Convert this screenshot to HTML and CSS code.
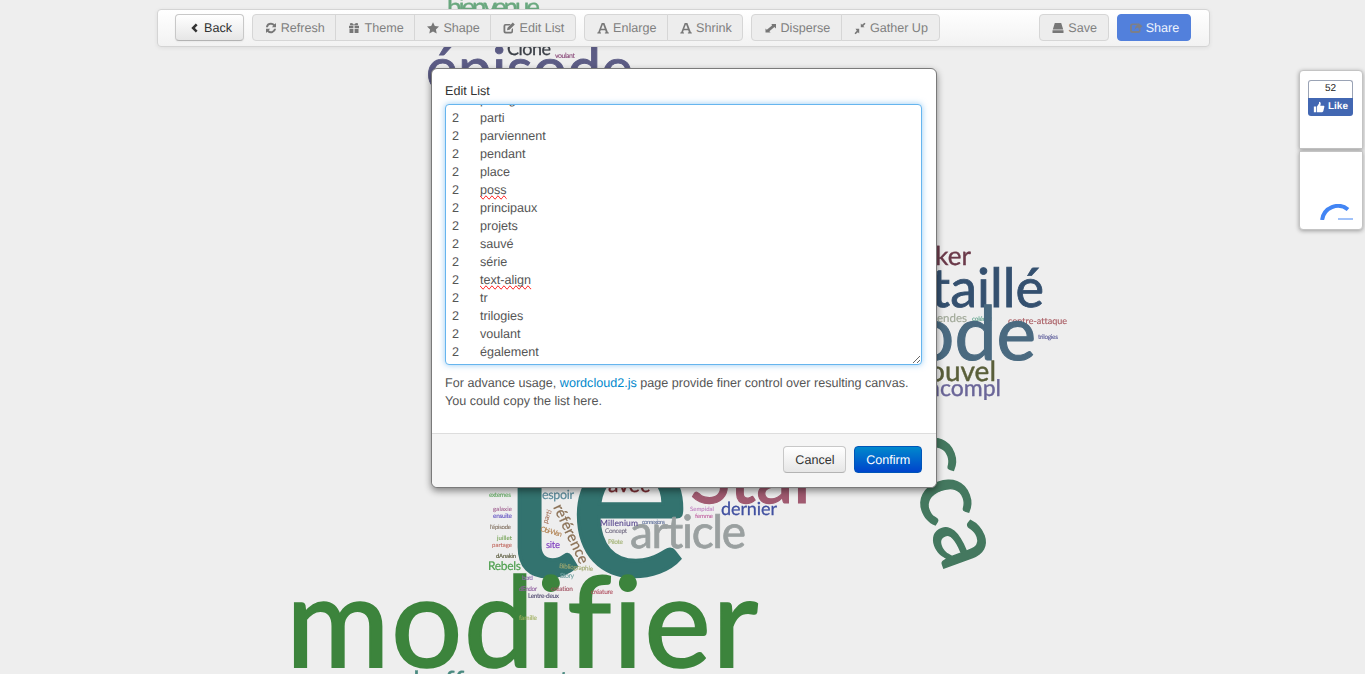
FILE: index.html
```html
<!DOCTYPE html>
<html lang="fr">
<head>
<meta charset="utf-8">
<title>Edit List</title>
<link rel="stylesheet" href="styles.css">
</head>
<body>
<svg class="cloud" viewBox="0 0 1365 674" aria-hidden="true">
  <g class="cloud-words">
    <text x="447" y="16" font-size="26" color="#6aa87f" textLength="93">bienvenue</text>
    <text x="405" y="41" font-size="14" color="#6fb0a8">y</text>
    <text x="563" y="41" font-size="14" color="#6fb0a8">y</text>
    <text x="507" y="55" font-size="18" color="#3c4048" textLength="44">Clone</text>
    <text x="555" y="58" font-size="7" color="#8a4a7a" textLength="20">voulant</text>
    <text x="426" y="90" font-size="60" color="#5c5c85" textLength="207">épisode</text>
    <text x="971" y="265" font-size="26" color="#6b3a4a" text-anchor="end">Walker</text>
    <text x="1044" y="307" font-size="54" color="#34506f" text-anchor="end">détaillé</text>
    <text x="967" y="322" font-size="11.500" color="#a0a898" text-anchor="end">légendes</text>
    <text x="972" y="321" font-size="6.500" color="#5aa088" textLength="20">coléopt</text>
    <text x="1008" y="324" font-size="9" color="#a85a60" textLength="59">contre-attaque</text>
    <text x="1038" y="339" font-size="6.500" color="#5a5a98" textLength="20">trilogies</text>
    <text x="1036" y="360" font-size="75" color="#4a6a80" text-anchor="end">épisode</text>
    <text x="996" y="381" font-size="28" color="#5a5f3a" text-anchor="end">nouvel</text>
    <text x="1001" y="396" font-size="23" color="#6a6598" text-anchor="end">incompl</text>
    <text x="899" y="445" font-size="95" color="#44785f" transform="rotate(70 899 445)">cca</text>
    <text x="496 569" y="575" font-size="230" color="#33736f">te</text>
    <text x="690" y="503" font-size="75" color="#a05a70">Star</text>
    <text x="608" y="492" font-size="21" color="#7a2a30" textLength="42">avec</text>
    <text x="542" y="499" font-size="12.500" color="#5a8a9a" textLength="32">espoir</text>
    <text x="489" y="497" font-size="6.500" color="#6ab06a" textLength="22">externes</text>
    <text x="721" y="515" font-size="18" color="#4050a0" textLength="56">dernier</text>
    <text x="630" y="548" font-size="46" color="#9aa0a0" textLength="116">article</text>
    <text x="690" y="511" font-size="6" color="#c080c0" textLength="24">Sempidal</text>
    <text x="695" y="518" font-size="6" color="#c060a0" textLength="18">femme</text>
    <text x="493" y="511" font-size="6" color="#a06090" textLength="19">galaxie</text>
    <text x="493" y="518" font-size="6.500" color="#6050c0" textLength="19">ensuite</text>
    <text x="490" y="529" font-size="6" color="#807060" textLength="21">l'épisode</text>
    <text x="497" y="540" font-size="6" color="#70a050" textLength="15">juillet</text>
    <text x="492" y="547" font-size="6" color="#c06a60" textLength="20">partage</text>
    <text x="496" y="558" font-size="6" color="#505030" textLength="20">dAnakin</text>
    <text x="488" y="570" font-size="12" color="#50a050" textLength="33">Rebels</text>
    <text x="553" y="507" font-size="15" color="#8a7055" transform="rotate(65 553 507)" textLength="64">référence</text>
    <text x="547" y="524" font-size="7" color="#a06a50" transform="rotate(-70 547 524)">parti</text>
    <text x="540" y="531" font-size="7" color="#b08050" transform="rotate(15 540 531)" textLength="22">Obi-Wan</text>
    <text x="546" y="548" font-size="9.500" color="#8040c0" textLength="14">site</text>
    <text x="600" y="526" font-size="8.500" color="#5a4a90" textLength="38">Millenium</text>
    <text x="642" y="524" font-size="6" color="#6a7aa0" textLength="23">connexions</text>
    <text x="605" y="533" font-size="6.500" color="#706a80" textLength="22">Concept</text>
    <text x="608" y="544" font-size="6.500" color="#a0b070" textLength="15">Pilote</text>
    <text x="286" y="667" font-size="126" color="#3c843c" textLength="472">modifier</text>
    <text x="559" y="568" font-size="6.500" color="#a0a870" transform="rotate(5 559 568)" textLength="34">Bibliographie</text>
    <text x="560" y="578" font-size="7" color="#70a0a0" textLength="14">Story</text>
    <text x="522" y="580" font-size="6.500" color="#9070b0" textLength="11">bord</text>
    <text x="519" y="591" font-size="6.500" color="#9060a0" textLength="18">dEndor</text>
    <text x="551" y="591" font-size="6.500" color="#a05060" textLength="22">création</text>
    <text x="528" y="598" font-size="6.500" color="#504a70" textLength="31">Lentre-deux</text>
    <text x="591" y="594" font-size="6.500" color="#b05060" textLength="22">créature</text>
    <text x="519" y="620" font-size="6.500" color="#a0b060" textLength="18">famille</text>
    <text x="404 430" y="691" font-size="28" color="#4a8a80">deffacement</text>
  </g>
</svg>

<header class="toolbar">
  <div class="toolbar-side">
    <button class="btn btn-back"><svg class="icon" viewBox="0 0 14 14"><path d="M8.800 2.500 10.600 4.300 7.900 7l2.700 2.700-1.800 1.800L4.300 7z"/></svg>Back</button>
    <div class="btn-group">
      <button class="btn"><svg class="icon" viewBox="0 0 14 14"><path d="M7 1.800a5.200 5.200 0 0 1 3.700 1.500l1.300-1.300v4.200H7.800l1.500-1.500A3.200 3.200 0 0 0 3.900 6.200H1.900A5.200 5.200 0 0 1 7 1.800zM2 12V7.800h4.200L4.700 9.300a3.200 3.200 0 0 0 5.400-1.500h2A5.200 5.200 0 0 1 3.300 10.700z"/></svg>Refresh</button>
      <button class="btn"><svg class="icon" viewBox="0 0 14 14"><path d="M2 4.800h4.400v2.400H2zM7.600 4.800H12v2.400H7.600zM2.500 8h3.900v4H2.500zM7.600 8h3.900v4H7.600zM4.200 2c1.200 0 2.300.8 2.800 2 .5-1.200 1.600-2 2.800-2 1.400 0 1.800 1.400.8 2.300H3.400C2.400 3.400 2.800 2 4.200 2z"/></svg>Theme</button>
      <button class="btn"><svg class="icon" viewBox="0 0 14 14"><path d="m7 1.300 1.800 3.800 4.200.5-3.100 2.900.8 4.100L7 10.600l-3.700 2 .8-4.100L1 5.600l4.200-.5z"/></svg>Shape</button>
      <button class="btn"><svg class="icon" viewBox="0 0 14 14"><path d="M3.500 3h5.200L7.300 4.500H3.800c-.3 0-.5.2-.5.5v5.200c0 .3.2.5.500.5H9c.3 0 .5-.2.5-.5V8.500L11 7v3.500a2 2 0 0 1-2 2H3.500a2 2 0 0 1-2-2V5a2 2 0 0 1 2-2zM5.500 6.800 10.800 1.500l2 2L7.500 8.800l-2.500.5z"/></svg>Edit List</button>
    </div>
    <div class="btn-group">
      <button class="btn"><svg class="icon" viewBox="0 0 14 14"><path d="M5.700 2h2.700l3.500 9.200.9.300v.9H8.900v-.9l1-.3-.7-2H4.700l-.7 2 1 .3v.9H1.300v-.9l.9-.3zM5.200 7.700h3.500L7 3.200z"/></svg>Enlarge</button>
      <button class="btn"><svg class="icon" viewBox="0 0 14 14"><path d="M5.700 2h2.700l3.500 9.200.9.300v.9H8.900v-.9l1-.3-.7-2H4.700l-.7 2 1 .3v.9H1.300v-.9l.9-.3zM5.200 7.700h3.500L7 3.200z"/></svg>Shrink</button>
    </div>
    <div class="btn-group">
      <button class="btn"><svg class="icon" viewBox="0 0 14 14"><path d="M8.500 3H13v4.500l-1.600-1.600-5 4.300 1.200 1.300H2.500V7.400l1.300 1.300 5.200-4.200z"/></svg>Disperse</button>
      <button class="btn"><svg class="icon" viewBox="0 0 14 14"><path d="M7.800 6.200V2.500l1.200 1.200 2.500-2 1 1-2.200 2.300 1.200 1.200zM6.200 7.800v4.700L4.900 11.200l-2.400 2-1-1 2.300-2.400-1.300-2z"/></svg>Gather Up</button>
    </div>
  </div>
  <div class="toolbar-side">
    <button class="btn btn-solo"><svg class="icon" viewBox="0 0 14 14"><path d="M3.800 2h6.400l2 6.500H1.800zM1.500 9.300h11V12h-11z"/></svg>Save</button>
    <button class="btn btn-share"><svg class="icon" viewBox="0 0 14 14"><path d="M3.500 2.500H10v1.400H3.800c-.5 0-.9.4-.9.900v4.400c0 .5.4.9.9.9h5.400c.5 0 .9-.4.9-.9V8.500l1.400-1.200v2.200a2.500 2.500 0 0 1-2.500 2.500H3.500A2.500 2.500 0 0 1 1 9.500V5a2.500 2.500 0 0 1 2.500-2.500zM9.500 3.800V2l4 3.300-4 3.300V6.700C7.800 6.700 6.500 7.300 5.700 9c0-3 1.500-5 3.800-5.200z"/></svg>Share</button>
  </div>
</header>

<aside class="social">
  <div class="social-box">
    <div class="like">
      <div class="like-count">52</div>
      <div class="like-action"><svg class="like-thumb" viewBox="0 0 14 14"><path d="M1 6.500h2.800V13H1zM4.700 6.500 7 3V1c1.300 0 2 .9 2 2.200 0 .9-.3 1.600-.5 2.300h3.700c.9 0 1.300.8 1 1.500L12 12c-.2.600-.7 1-1.300 1H4.700z"/></svg>Like</div>
    </div>
  </div>
  <div class="social-box social-loading">
    <svg class="spinner" viewBox="0 0 34 16"><path class="spinner-arc" d="M2.100 16A16 16 0 0 1 28 5.500"/><path class="spinner-line" d="M18 15h15"/></svg>
  </div>
</aside>

<section class="modal">
  <div class="modal-body">
    <label class="modal-label">Edit List</label>
    <div class="list-box">
      <div class="list-rows">
        <div class="list-row"><span class="list-count">2</span><span>partage</span></div>
        <div class="list-row"><span class="list-count">2</span><span>parti</span></div>
        <div class="list-row"><span class="list-count">2</span><span>parviennent</span></div>
        <div class="list-row"><span class="list-count">2</span><span>pendant</span></div>
        <div class="list-row"><span class="list-count">2</span><span>place</span></div>
        <div class="list-row"><span class="list-count">2</span><span class="misspelt">poss</span></div>
        <div class="list-row"><span class="list-count">2</span><span>principaux</span></div>
        <div class="list-row"><span class="list-count">2</span><span>projets</span></div>
        <div class="list-row"><span class="list-count">2</span><span>sauvé</span></div>
        <div class="list-row"><span class="list-count">2</span><span>série</span></div>
        <div class="list-row"><span class="list-count">2</span><span class="misspelt">text-align</span></div>
        <div class="list-row"><span class="list-count">2</span><span>tr</span></div>
        <div class="list-row"><span class="list-count">2</span><span>trilogies</span></div>
        <div class="list-row"><span class="list-count">2</span><span>voulant</span></div>
        <div class="list-row"><span class="list-count">2</span><span>également</span></div>
      </div>
    </div>
    <p class="modal-note">For advance usage, <a href="#">wordcloud2.js</a> page provide finer control over resulting canvas. You could copy the list here.</p>
  </div>
  <footer class="modal-footer">
    <button class="btn btn-cancel">Cancel</button>
    <button class="btn btn-confirm">Confirm</button>
  </footer>
</section>
</body>
</html>
```
FILE: styles.css
```css
* { box-sizing: border-box; }

html, body {
  margin: 0;
  height: 100%;
  overflow: hidden;
}

body {
  background: #eeeeee;
  font-family: "Liberation Sans", Arial, sans-serif;
  font-size: 12.6px;
  line-height: 18px;
  color: #333333;
  text-rendering: geometricPrecision;
}

.cloud {
  position: absolute;
  left: 0;
  top: 0;
  width: 1365px;
  height: 674px;
  filter: blur(0.3px);
}

.cloud-words {
  font-family: Lato, sans-serif;
  font-variant-ligatures: none;
}

.cloud-words text {
  fill: currentColor;
  stroke: currentColor;
  stroke-width: 0.015em;
}

.toolbar {
  position: absolute;
  left: 157px;
  top: 9px;
  width: 1053px;
  height: 38px;
  padding: 4px 18px 0 17px;
  display: flex;
  justify-content: space-between;
  background: linear-gradient(#ffffff, #f2f2f2);
  border: 1px solid #d4d4d4;
  border-radius: 4px;
  box-shadow: 0 1px 4px rgba(0, 0, 0, 0.065);
}

.toolbar-side {
  display: flex;
  gap: 8px;
}

.btn {
  height: 27px;
  padding: 0 10.700px 0 11px;
  display: inline-flex;
  align-items: center;
  gap: 3px;
  font: inherit;
  color: #808080;
  background: #ededed;
  border: 1px solid #d6d6d6;
  border-radius: 4px;
  white-space: nowrap;
  text-rendering: inherit;
}

.icon {
  width: 14px;
  height: 14px;
  fill: #777777;
  flex: none;
}

.btn-back {
  color: #333333;
  background: linear-gradient(#ffffff, #e6e6e6);
  border-color: #c8c8c8 #c8c8c8 #b3b3b3;
  box-shadow: 0 1px 2px rgba(0, 0, 0, 0.05);
}

.btn-back .icon {
  fill: #333333;
}

.btn-group {
  display: flex;
}

.btn-group .btn {
  border-radius: 0;
  margin-left: -1px;
}

.btn-group .btn:first-child {
  margin-left: 0;
  border-radius: 4px 0 0 4px;
}

.btn-group .btn:last-child {
  border-radius: 0 4px 4px 0;
}

.btn-share {
  color: #eef3fd;
  background: #5280dc;
  border-color: #5280dc;
}

.btn-share .icon {
  fill: #7d7f87;
}

.social {
  position: absolute;
  left: 1299px;
  top: 70px;
  width: 64px;
  display: flex;
  flex-direction: column;
  gap: 2px;
}

.social-box {
  height: 79px;
  padding: 9px 8px;
  background: #ffffff;
  border: 1px solid #c4c4c4;
  border-radius: 4px 4px 0 0;
  box-shadow: 0 1px 4px rgba(0, 0, 0, 0.35);
}

.social-loading {
  position: relative;
  border-radius: 0 0 4px 4px;
}

.like {
  width: 45px;
  height: 36px;
  display: flex;
  flex-direction: column;
}

.like-count {
  height: 18px;
  text-align: center;
  font-size: 10px;
  line-height: 16px;
  color: #222222;
  border: 1px solid #9aa3b5;
  border-bottom: 0;
  border-radius: 3px 3px 0 0;
}

.like-action {
  height: 18px;
  display: flex;
  align-items: center;
  justify-content: center;
  gap: 3px;
  font-size: 10px;
  font-weight: bold;
  color: #ffffff;
  background: #4267b2;
  border-radius: 0 0 3px 3px;
}

.like-thumb {
  width: 12px;
  height: 12px;
  fill: #ffffff;
}

.spinner {
  position: absolute;
  left: 20px;
  top: 52px;
  width: 34px;
  height: 16px;
}

.spinner-arc {
  fill: none;
  stroke: #4285f4;
  stroke-width: 4;
}

.spinner-line {
  fill: none;
  stroke: #4285f4;
  stroke-width: 1;
}

.modal {
  position: absolute;
  left: 431px;
  top: 68px;
  width: 506px;
  height: 420px;
  display: flex;
  flex-direction: column;
  background: #ffffff;
  border: 1px solid #7a7a7a;
  border-radius: 6px;
  box-shadow: 0 3px 7px rgba(0, 0, 0, 0.45);
}

.modal-body {
  flex: 1;
  padding: 13px 13px 0;
}

.modal-label {
  display: block;
  height: 22px;
}

.list-box {
  width: 477px;
  height: 261px;
  padding: 0 6px;
  color: #555555;
  background: #ffffff;
  border: 1px solid #66b5ee;
  border-radius: 4px;
  box-shadow: 0 0 6px rgba(82, 168, 236, 0.6);
  overflow: hidden;
  resize: both;
}

.list-rows {
  margin-top: -14px;
}

.list-row {
  display: flex;
  height: 18px;
}

.list-count {
  width: 28px;
  flex: none;
}

.misspelt {
  text-decoration: underline dotted #d9292b;
  text-decoration-line: spelling-error;
  text-decoration-skip-ink: none;
}

.modal-note {
  margin: 9px 0 0;
  color: #555555;
}

.modal-note a {
  color: #0088cc;
  text-decoration: none;
}

.modal-footer {
  height: 54px;
  padding: 12px 14px 0;
  display: flex;
  justify-content: flex-end;
  gap: 8px;
  background: #f5f5f5;
  border-top: 1px solid #dddddd;
  border-radius: 0 0 6px 6px;
}

.btn-cancel {
  color: #333333;
  background: linear-gradient(#ffffff, #e6e6e6);
  border-color: #c8c8c8 #c8c8c8 #b3b3b3;
}

.btn-confirm {
  color: #ffffff;
  background: linear-gradient(#0088cc, #0044cc);
  border-color: #0055b8;
}
```
